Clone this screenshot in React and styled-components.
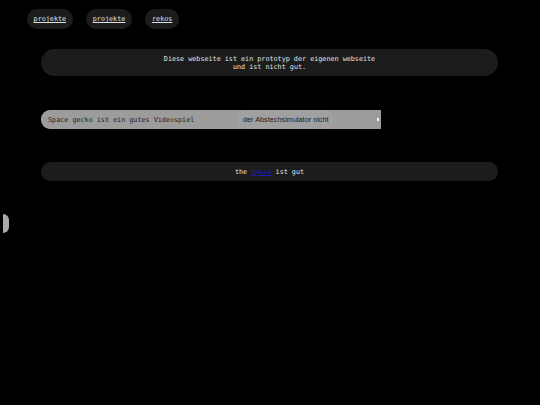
import styled, { createGlobalStyle } from "styled-components";

const GlobalStyle = createGlobalStyle`
  html, body {
    margin: 0;
    padding: 0;
    background: #000;
  }
  body {
    font-family: "DejaVu Sans Mono", monospace;
    font-size: 6.75px;
    color: #e2e2e2;
  }
`;

const Page = styled.div`
  display: flex;
  flex-direction: column;
  padding-top: 9px;
  min-height: 405px;
  box-sizing: border-box;
`;

const Nav = styled.nav`
  display: flex;
  gap: 13.5px;
  padding-left: 27px;
`;

const NavPill = styled.a`
  display: flex;
  align-items: center;
  height: 20px;
  padding: 0 6.6px;
  border-radius: 10px;
  background: #1c1c1c;
  color: #e0e0e0;
  text-decoration: underline;
  cursor: pointer;
`;

const InfoBox = styled.div`
  margin: 20px 42px 0 41px;
  padding: 5.5px 0;
  border-radius: 14px;
  background: #1c1c1c;
  text-align: center;
  line-height: 8px;
`;

const Carousel = styled.div`
  display: flex;
  align-items: center;
  width: 340px;
  height: 19px;
  margin: 34px 0 0 41px;
  border-radius: 10px 0 0 10px;
  background: #9c9c9c;
  overflow: hidden;
  color: #1e1e1e;
`;

const Slide = styled.div`
  flex: none;
  display: flex;
  align-items: center;
  height: 100%;
  padding: ${(p) => p.$pad || "0 7px"};
  width: ${(p) => p.$width};
  box-sizing: border-box;
  white-space: nowrap;
  font-family: ${(p) =>
    p.$sans ? '"Liberation Sans", Arial, sans-serif' : '"DejaVu Sans Mono", monospace'};
  font-size: ${(p) => (p.$sans ? "7.3px" : "6.75px")};
  border-radius: ${(p) => (p.$round ? "6px" : "0")};
  background: ${(p) => (p.$round ? "#a0a0a0" : "#9c9c9c")};
`;

const Dot = styled.span`
  margin-left: auto;
  width: 2px;
  height: 3px;
  background: #f4f4f4;
`;

const LineBox = styled.div`
  display: flex;
  align-items: center;
  justify-content: center;
  height: 19px;
  margin: 33px 42px 0 41px;
  border-radius: 10px;
  background: #1c1c1c;
  white-space: pre;

  a {
    color: #1c1cc0;
    text-decoration: underline;
  }
`;

const SideTab = styled.div`
  width: 6px;
  height: 19px;
  margin: 33px 0 0 3px;
  border-radius: 0 10px 10px 0;
  background: #a9a9a9;
`;

export default function App() {
  return (
    <>
      <GlobalStyle />
      <Page>
        <Nav>
          <NavPill>projekte</NavPill>
          <NavPill>projekte</NavPill>
          <NavPill>rekos</NavPill>
        </Nav>
        <InfoBox>
          Diese webseite ist ein prototyp der eigenen webseite
          <br />
          und ist nicht gut.
        </InfoBox>
        <Carousel>
          <Slide $width="197px">Space gecko ist ein gutes Videospiel</Slide>
          <Slide $sans $round $width="94px" $pad="0 5px">
            der Abstechsimulator nicht
          </Slide>
          <Slide $width="49px" $pad="0 2px 0 0">
            <Dot />
          </Slide>
        </Carousel>
        <LineBox>
          the <a>space</a> ist gut
        </LineBox>
        <SideTab />
      </Page>
    </>
  );
}
